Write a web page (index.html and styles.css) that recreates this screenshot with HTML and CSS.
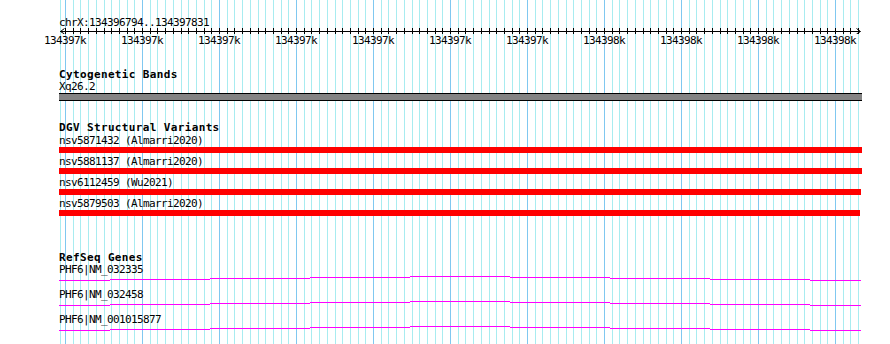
FILE: index.html
```html
<html>
<head>
<link rel="stylesheet" href="styles.css">
</head>
<body>
<div class="tracks">

  <div class="ruler">
    <div class="loc">chrX:134396794..134397831</div>
    <svg class="axis" width="803" height="6" viewBox="0 0 803 6">
      <defs>
        <pattern id="ticks" patternUnits="userSpaceOnUse" x="6" y="0" width="77" height="6">
          <path d="M0.5 0V6M8.5 0V6M15.5 0V6M23.5 0V6M31.5 0V6M39.5 0V6M46.5 0V6M54.5 0V6M62.5 0V6M69.5 0V6" stroke="#000" />
        </pattern>
      </defs>
      <rect x="5" y="0" width="795" height="6" fill="url(#ticks)" />
      <path d="M1 3.5H801" stroke="#000" />
      <path d="M5.5 0.5L1.5 3.5L5.5 6M797.5 0.5L801.5 3.5L797.5 6" fill="none" stroke="#000" />
    </svg>
    <div class="scale">
      <span>134397k</span><span>134397k</span><span>134397k</span><span>134397k</span>
      <span>134397k</span><span>134397k</span><span>134397k</span><span>134398k</span>
      <span>134398k</span><span>134398k</span><span>134398k</span>
    </div>
  </div>

  <section class="track track-bands">
    <div class="track-title">Cytogenetic Bands</div>
    <div class="feat-label">Xq26.2</div>
    <div class="band"></div>
  </section>

  <section class="track track-dgv">
    <div class="track-title">DGV Structural Variants</div>
    <div class="variant">
      <div class="feat-label">nsv5871432 (Almarri2020)</div>
      <div class="bar" style="width: 803px"></div>
    </div>
    <div class="variant">
      <div class="feat-label">nsv5881137 (Almarri2020)</div>
      <div class="bar" style="width: 803px"></div>
    </div>
    <div class="variant">
      <div class="feat-label">nsv6112459 (Wu2021)</div>
      <div class="bar" style="width: 802px"></div>
    </div>
    <div class="variant">
      <div class="feat-label">nsv5879503 (Almarri2020)</div>
      <div class="bar" style="width: 801px"></div>
    </div>
  </section>

  <section class="track track-genes">
    <div class="track-title">RefSeq Genes</div>
    <div class="gene">
      <div class="feat-label">PHF6|NM_032335</div>
      <svg class="gene-line" width="803" height="13" viewBox="0 0 803 13">
        <path d="M0 5.5H51M51 4.5H151M151 3.5H251M251 2.5H351M351 1.5H451M451 2.5H551M551 3.5H651M651 4.5H751M751 5.5H802" />
      </svg>
    </div>
    <div class="gene">
      <div class="feat-label">PHF6|NM_032458</div>
      <svg class="gene-line" width="803" height="13" viewBox="0 0 803 13">
        <path d="M0 5.5H51M51 4.5H151M151 3.5H251M251 2.5H351M351 1.5H451M451 2.5H551M551 3.5H651M651 4.5H751M751 5.5H802" />
      </svg>
    </div>
    <div class="gene">
      <div class="feat-label">PHF6|NM_001015877</div>
      <svg class="gene-line" width="803" height="13" viewBox="0 0 803 13">
        <path d="M0 5.5H51M51 4.5H151M151 3.5H251M251 2.5H351M351 1.5H451M451 2.5H551M551 3.5H651M651 4.5H751M751 5.5H802" />
      </svg>
    </div>
  </section>

</div>
</body>
</html>
```

FILE: styles.css
```css
:root {
  --grid-minor: #a8ecf0;
  --grid-major: #80c8f0;
}

* {
  box-sizing: border-box;
  margin: 0;
  padding: 0;
}

body {
  background: #fff;
  color: #000;
  font-family: "DejaVu Sans Mono", monospace;
  font-size: 11px;
  letter-spacing: -0.62px;
  line-height: 12px;
  overflow: hidden;
}

.tracks {
  margin-left: 59px;
  width: 803px;
  height: 344px;
  background-image:
    linear-gradient(var(--grid-minor), var(--grid-minor)),
    linear-gradient(to right,
      var(--grid-major) 0 1px, transparent 1px 8px,
      var(--grid-minor) 8px 9px, transparent 9px 15px,
      var(--grid-minor) 15px 16px, transparent 16px 23px,
      var(--grid-minor) 23px 24px, transparent 24px 31px,
      var(--grid-minor) 31px 32px, transparent 32px 39px,
      var(--grid-minor) 39px 40px, transparent 40px 46px,
      var(--grid-minor) 46px 47px, transparent 47px 54px,
      var(--grid-minor) 54px 55px, transparent 55px 62px,
      var(--grid-minor) 62px 63px, transparent 63px 69px,
      var(--grid-minor) 69px 70px, transparent 70px 77px);
  background-size: 1px 100%, 77px 100%;
  background-position: 1px 0, 6px 0;
  background-repeat: no-repeat, repeat-x;
}

.ruler {
  padding-top: 16px;
}

.loc,
.scale,
.track-title,
.feat-label {
  height: 12px;
  padding-top: 1px;
  white-space: nowrap;
}

.axis {
  display: block;
}

.scale {
  display: flex;
  margin-left: -32.5px;
}

.scale span {
  flex: 0 0 77px;
  text-align: center;
}

.track-title {
  font-weight: bold;
  letter-spacing: 0.36px;
}

.track-bands {
  margin-top: 22px;
}

.band {
  margin-top: 1px;
  height: 8px;
  background: #848484;
  border-top: 1px solid #000;
  border-bottom: 1px solid #000;
}

.track-dgv {
  margin-top: 20px;
}

.track-dgv .track-title {
  margin-bottom: 1px;
}

.variant .bar {
  margin-top: 1px;
  margin-bottom: 2px;
  height: 6px;
  background: #ff0000;
}

.track-genes {
  margin-top: 35px;
}

.gene-line {
  display: block;
}

.gene-line path {
  fill: none;
  stroke: #ff00ff;
  stroke-width: 1;
  shape-rendering: crispEdges;
}
```
